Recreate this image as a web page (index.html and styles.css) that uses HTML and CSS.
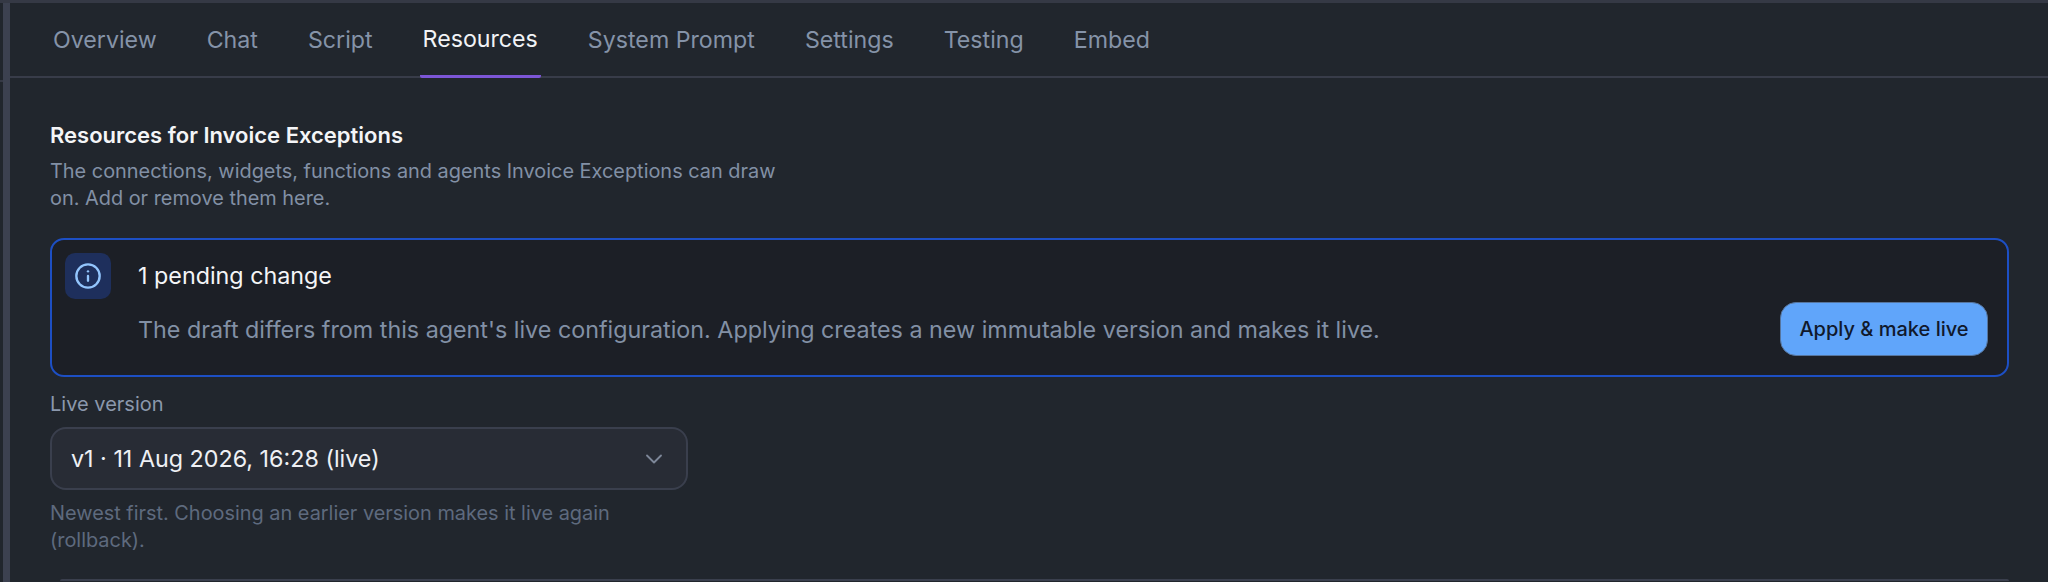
FILE: index.html
```html
<!DOCTYPE html>
<html lang="en">
    <head>
        <meta charset="UTF-8">
        <meta name="viewport" content="width=device-width, initial-scale=1.0">
        <title>Resources for Invoice Exceptions</title>
        <link rel="stylesheet" href="styles.css">
    </head>
    <body>
        <div class="app">
            <div class="edge"><div class="edge-line"></div></div>
            <div class="rail"></div>
            <main class="main">
                <nav class="tabs">
                    <a class="tab">Overview</a>
                    <a class="tab">Chat</a>
                    <a class="tab">Script</a>
                    <a class="tab active">Resources</a>
                    <a class="tab">System Prompt</a>
                    <a class="tab">Settings</a>
                    <a class="tab">Testing</a>
                    <a class="tab">Embed</a>
                </nav>

                <section class="content">
                    <h2 class="heading">Resources for Invoice Exceptions</h2>
                    <p class="intro">The connections, widgets, functions and agents Invoice Exceptions can draw on. Add or remove them here.</p>

                    <div class="notice">
                        <div class="notice-icon">
                            <svg width="28" height="28" viewBox="0 0 24 24" fill="none" stroke="#93c5fd" stroke-width="2" stroke-linecap="round">
                                <circle cx="12" cy="12" r="10"></circle>
                                <path d="M12 16v-4"></path>
                                <path d="M12 8h.01"></path>
                            </svg>
                        </div>
                        <div class="notice-body">
                            <div class="notice-title">1 pending change</div>
                            <div class="notice-row">
                                <div class="notice-text">The draft differs from this agent's live configuration. Applying creates a new immutable version and makes it live.</div>
                                <button class="apply-btn">Apply &amp; make live</button>
                            </div>
                        </div>
                    </div>

                    <label class="field-label">Live version</label>
                    <div class="select">
                        <span>v1 · 11 Aug 2026, 16:28 (live)</span>
                        <svg width="28" height="28" viewBox="0 0 24 24" fill="none" stroke="#7d8798" stroke-width="1.6" stroke-linecap="round" stroke-linejoin="round">
                            <path d="m6 9 6 6 6-6"></path>
                        </svg>
                    </div>
                    <p class="hint">Newest first. Choosing an earlier version makes it live again (rollback).</p>

                    <div class="next-card"></div>
                </section>
            </main>
        </div>
    </body>
</html>
```

FILE: styles.css
```css
* {
    box-sizing: border-box;
}

html,
body {
    margin: 0;
    height: 100%;
    overflow: hidden;
}

body {
    font-family: Inter, "Liberation Sans", sans-serif;
    background-color: #21262d;
    color: #f1f3f6;
}

.app {
    display: flex;
    height: 582px;
    border-top: 3px solid #353945;
}

.edge {
    width: 3px;
    flex: none;
    padding-top: 77px;
}

.edge-line {
    height: 2px;
    background-color: #353945;
}

.rail {
    width: 7px;
    flex: none;
    background-color: #3c4150;
}

.main {
    flex: 1;
    min-width: 0;
}

.tabs {
    display: flex;
    gap: 44px;
    height: 75px;
    padding-left: 40px;
    border-bottom: 2px solid #383c49;
}

.tab {
    display: flex;
    align-items: center;
    height: 75px;
    padding: 0 3px 2px;
    font-size: 23.2px;
    color: #8593a8;
}

.tab.active {
    color: #f1f3f6;
    border-bottom: 3px solid #7c56d6;
    border-radius: 2px;
    padding-bottom: 0;
}

.content {
    padding: 44px 39px 0 40px;
}

.heading {
    margin: 0;
    font-size: 22px;
    line-height: 27px;
    font-weight: 600;
    color: #f4f5f7;
}

.intro {
    width: 746px;
    margin: 9px 0 0;
    font-size: 19.9px;
    line-height: 27px;
    color: #8290a5;
}

.notice {
    display: flex;
    gap: 27px;
    height: 139px;
    margin-top: 26px;
    padding: 13px 19px 0 13px;
    background-color: #1c1f26;
    border: 2px solid #1d4fc4;
    border-radius: 14px;
}

.notice-icon {
    display: flex;
    align-items: center;
    justify-content: center;
    width: 46px;
    height: 46px;
    flex: none;
    background-color: #1e2f5c;
    border-radius: 10px;
}

.notice-body {
    flex: 1;
    min-width: 0;
}

.notice-title {
    font-size: 23.3px;
    line-height: 46px;
    color: #f4f5f7;
}

.notice-row {
    display: flex;
    align-items: center;
    justify-content: space-between;
    margin-top: 3px;
}

.notice-text {
    font-size: 23.3px;
    color: #8290a5;
}

.apply-btn {
    width: 208px;
    height: 54px;
    flex: none;
    padding: 0;
    font-family: inherit;
    font-size: 20px;
    font-weight: 500;
    color: #10192c;
    background-color: #60a5fa;
    border: 1px solid #56759e;
    border-radius: 16px;
}

.field-label {
    display: block;
    margin-top: 14px;
    font-size: 20px;
    line-height: 26px;
    font-weight: 400;
    color: #8b98ac;
}

.select {
    display: flex;
    align-items: center;
    justify-content: space-between;
    width: 638px;
    height: 63px;
    margin-top: 10px;
    padding: 0 18px 0 19px;
    font-size: 23.3px;
    color: #eef0f4;
    background-color: #282c35;
    border: 2px solid #3a3f4d;
    border-radius: 16px;
}

.hint {
    width: 638px;
    margin: 10px 0 0;
    font-size: 19.9px;
    line-height: 27px;
    color: #5e6a7e;
}

.next-card {
    height: 2px;
    margin: 25px 0 0 10px;
    border-top: 2px solid #3a3f4d;
    border-radius: 14px 14px 0 0;
}
```
